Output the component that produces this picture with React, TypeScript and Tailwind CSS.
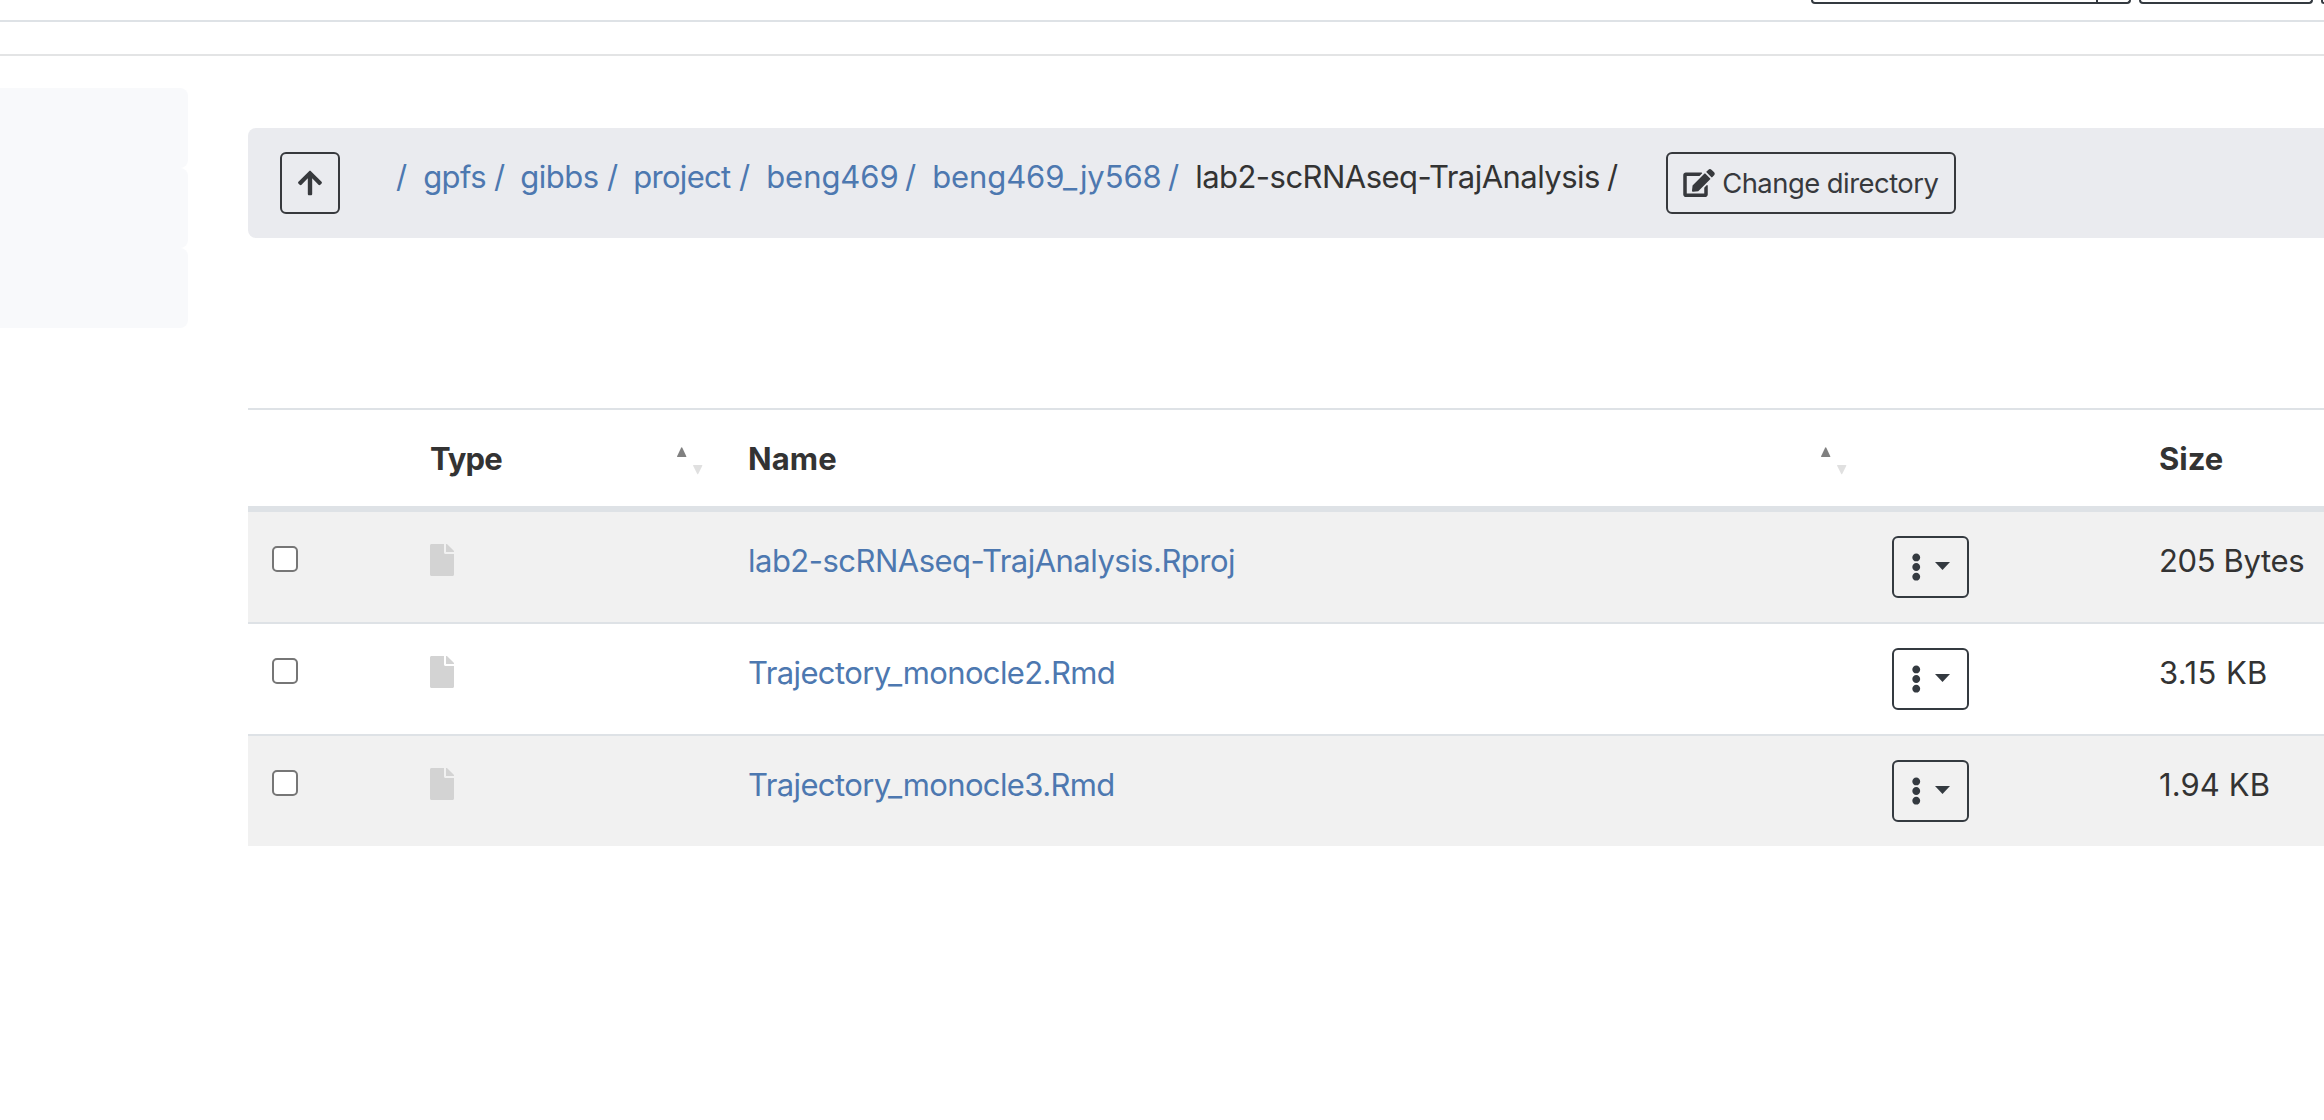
import { FaArrowUp, FaEdit, FaEllipsisV, FaFile } from "react-icons/fa";

const crumbs = [
  { label: "gpfs", box: "ml-[16px] w-[82px]", spacing: "tracking-[-0.6px]" },
  { label: "gibbs", box: "ml-[15px] w-[98px]", spacing: "tracking-[-0.5px]" },
  { label: "project", box: "ml-[15px] w-[117px]", spacing: "tracking-[-0.68px]" },
  { label: "beng469", box: "ml-[16px] w-[150px]", spacing: "tracking-[-0.05px]" },
  { label: "beng469_jy568", box: "ml-[16px] w-[247px]", spacing: "tracking-[-0.1px]" },
];

const files = [
  { name: "lab2-scRNAseq-TrajAnalysis.Rproj", size: "205 Bytes", nameSpacing: "tracking-[-0.52px]", sizeSpacing: "tracking-[-0.36px]" },
  { name: "Trajectory_monocle2.Rmd", size: "3.15 KB", nameSpacing: "tracking-[-0.61px]", sizeSpacing: "tracking-[0.4px]" },
  { name: "Trajectory_monocle3.Rmd", size: "1.94 KB", nameSpacing: "tracking-[-0.61px]", sizeSpacing: "tracking-[0.1px]" },
];

const columns = "grid grid-cols-[182px_318px_1143px_268px_1fr]";

function SortMark() {
  return (
    <svg className="mt-[12px] h-[28px] w-[26px]" viewBox="0 0 26 28">
      <path d="M4.1 .8Q4.7 -.2 5.3 .8L9.3 9.2Q9.5 10 8.7 10H.7Q-.1 10 .1 9.2Z" fill="#808080" />
      <path d="M20.1 26.7Q20.7 27.7 21.3 26.7L25.3 18.8Q25.5 18 24.7 18H16.7Q15.9 18 16.1 18.8Z" fill="#e0e0e0" />
    </svg>
  );
}

function TopBar() {
  return (
    <header className="flex h-[22px] items-start justify-end overflow-hidden border-b-2 border-[#dee2e6]">
      <div className="flex h-[4px] w-[320px] rounded-b-[6px] border-x-2 border-b-2 border-[#343a40]">
        <div className="h-[2px] w-[285px] border-r-2 border-[#343a40]" />
      </div>
      <div className="ml-[8px] h-[4px] w-[174px] rounded-b-[6px] border-x-2 border-b-2 border-[#343a40]" />
      <div className="ml-[8px] h-[4px] w-[3px] rounded-bl-[6px] border-b-2 border-l-2 border-[#343a40]" />
    </header>
  );
}

function PathBar() {
  return (
    <nav className="flex h-[110px] items-start rounded-l-[8px] bg-[#eaebef] pt-6 pl-8">
      <button className="flex h-[62px] w-[60px] items-center justify-center rounded-[6px] border-2 border-[#37393d]">
        <FaArrowUp className="size-[28px] text-[#37393d]" />
      </button>
      <div className="ml-[56px] flex h-[50px] pt-px text-[#4d78b0]">
        <a>/</a>
        {crumbs.map((c) => (
          <a key={c.label} className={`flex justify-between ${c.box}`}>
            <span className={c.spacing}>{c.label}</span>
            <span>/</span>
          </a>
        ))}
        <span className="ml-[16px] flex w-[423px] justify-between text-[#333]">
          <span className="tracking-[-0.53px]">lab2-scRNAseq-TrajAnalysis</span>
          <span>/</span>
        </span>
      </div>
      <button className="ml-[48px] flex h-[62px] w-[290px] items-center rounded-[6px] border-2 border-[#37393d] pl-[15px] text-[#37393d]">
        <FaEdit className="h-[28px] w-[32px]" />
        <span className="ml-[7px] text-[27.4px] leading-[42px] tracking-[-0.51px] whitespace-nowrap">Change directory</span>
      </button>
    </nav>
  );
}

export default function App() {
  return (
    <div className="h-[1120px] w-[2324px] overflow-hidden bg-white font-[Inter,sans-serif] text-[31px] leading-[48px] whitespace-nowrap text-[#333]">
      <TopBar />
      <div className="h-[34px] border-b-2 border-[#e3e4e5]" />
      <div className="flex items-start">
        <aside className="mt-8 w-[188px]">
          <div className="h-[80px] rounded-r-[8px] bg-[#f8f9fb]" />
          <div className="h-[80px] rounded-r-[8px] bg-[#f8f9fb]" />
          <div className="h-[80px] rounded-r-[8px] bg-[#f8f9fb]" />
        </aside>
        <main className="mt-[72px] ml-[60px] flex-1">
          <PathBar />
          <section className="mt-[170px]">
            <div className={`${columns} h-[104px] border-t-2 border-b-[6px] border-[#dee2e6] pt-[25px] font-bold`}>
              <span />
              <div className="flex justify-between">
                <span className="tracking-[-0.9px]">Type</span>
                <span className="mr-[45px]"><SortMark /></span>
              </div>
              <div className="flex justify-between">
                <span className="tracking-[0.1px]">Name</span>
                <span className="mr-[44px]"><SortMark /></span>
              </div>
              <span />
              <span>Size</span>
            </div>
            {files.map((f, i) => (
              <div
                key={f.name}
                className={`${columns} ${i > 0 ? "h-[112px] border-t-2 border-[#dee2e6]" : "h-[110px]"} ${i % 2 === 0 ? "bg-[#f1f1f1]" : "bg-white"}`}
              >
                <input type="checkbox" className="mt-[34px] ml-6 size-[26px] appearance-none rounded-[5px] border-2 border-[#767676] bg-white" />
                <FaFile className="-ml-[0.4px] mt-8 h-[32px] w-[24px] text-[#d3d3d3]" />
                <a className={`pt-[25px] text-[#4d78b0] ${f.nameSpacing}`}>{f.name}</a>
                <button className="mt-6 ml-px flex h-[62px] w-[77px] items-center rounded-[6px] border-2 border-[#343a40] pl-[16.5px] text-[#343a40]">
                  <FaEllipsisV className="h-[28px] w-[10.5px]" />
                  <svg className="mb-[2px] ml-[14px] h-[8px] w-[15px]" viewBox="0 0 15 8">
                    <path d="M0 0H15L7.5 8Z" fill="currentColor" />
                  </svg>
                </button>
                <span className={`pt-[25px] ${f.sizeSpacing}`}>{f.size}</span>
              </div>
            ))}
          </section>
        </main>
      </div>
    </div>
  );
}
